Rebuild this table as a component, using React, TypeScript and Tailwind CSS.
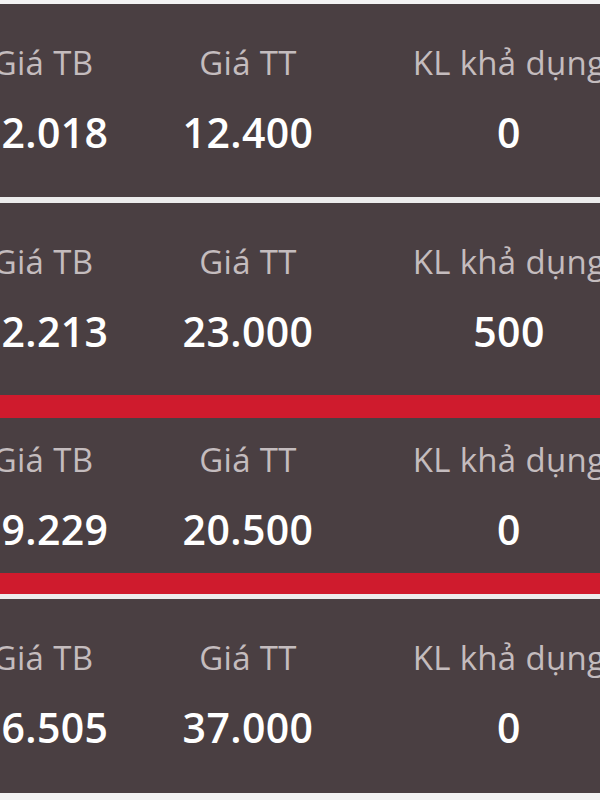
import React from "react";

type Row = {
    avg: string;
    market: string;
    available: string;
    selected?: boolean;
};

const rows: Row[] = [
    { avg: "12.018", market: "12.400", available: "0" },
    { avg: "12.213", market: "23.000", available: "500" },
    { avg: "19.229", market: "20.500", available: "0", selected: true },
    { avg: "16.505", market: "37.000", available: "0" },
];

function Cell({ label, value, width }: { label: string; value: string; width: string }) {
    return (
        <div className={`${width} shrink-0 flex flex-col items-center whitespace-nowrap`}>
            <span className="text-[33px] leading-[40px] tracking-[0.01em] text-[#c4bcbe]">{label}</span>
            <span className="mt-[25px] text-[41px] leading-[48px] tracking-[0.01em] font-semibold text-white">
                {value}
            </span>
        </div>
    );
}

function Card({ row, height, top }: { row: Row; height: string; top: string }) {
    return (
        <div
            className={`${height} ${top} overflow-hidden bg-[#4a3f42] ${
                row.selected ? "border-t-[23px] border-b-[21px] border-[#cf1b2d]" : ""
            }`}
        >
            <div className="flex ml-[-52px]">
                <Cell label="Giá TB" value={row.avg} width="w-[190px]" />
                <Cell label="Giá TT" value={row.market} width="w-[220px]" />
                <Cell label="KL khả dụng" value={row.available} width="w-[302px]" />
            </div>
        </div>
    );
}

export default function App() {
    return (
        <div
            className="w-[600px] h-[800px] overflow-hidden bg-[#f3f3f3] pt-[4px]"
            style={{ fontFamily: '"Open Sans", "Noto Sans", sans-serif' }}
        >
            <Card row={rows[0]} height="h-[193px]" top="pt-[39px]" />
            <div className="h-[6px] bg-[#ececec]" />
            <Card row={rows[1]} height="h-[192px]" top="pt-[39px]" />
            <Card row={rows[2]} height="h-[199px]" top="pt-[22px]" />
            <div className="h-[5px] bg-[#ececec]" />
            <Card row={rows[3]} height="h-[194px]" top="pt-[39px]" />
        </div>
    );
}
